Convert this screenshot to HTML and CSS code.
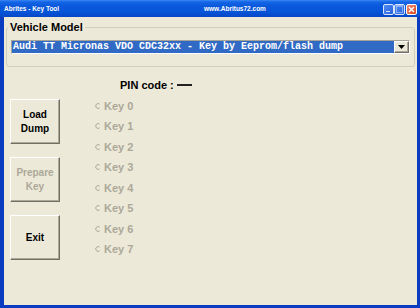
FILE: index.html
```html
<!DOCTYPE html>
<html>
<head>
<meta charset="utf-8">
<link rel="stylesheet" href="styles.css">
</head>
<body>
<div class="window">
  <div class="titlebar">
    <span class="title">Abrites - Key Tool</span>
    <span class="url">www.Abritus72.com</span>
    <div class="ctrls">
      <span class="cb min"><span class="bar"></span></span>
      <span class="cb max"><span class="box"></span></span>
      <span class="cb close"><svg width="7" height="7" viewBox="0 0 7 7"><path d="M1 1L6 6M6 1L1 6" stroke="#fff" stroke-width="1.4"/></svg></span>
    </div>
  </div>
  <div class="client">
    <fieldset class="group">
      <legend>Vehicle Model</legend>
      <div class="combo">
        <div class="sel">Audi TT Micronas VDO CDC32xx - Key by Eeprom/flash dump</div>
        <div class="drop"><svg width="7" height="4" viewBox="0 0 7 4"><path d="M0 0H7L3.5 4Z" fill="#000"/></svg></div>
      </div>
    </fieldset>
    <div class="main">
      <div class="btns">
        <div class="btn">Load<br>Dump</div>
        <div class="btn disabled">Prepare<br>Key</div>
        <div class="btn">Exit</div>
      </div>
      <div class="keys">
        <div class="pin">PIN code : <span class="dash"></span></div>
        <div class="radio"><svg class="rc" width="6" height="6" viewBox="0 0 6 6"><path d="M4.6 1.1A2.4 2.4 0 1 0 4.6 4.9" fill="none" stroke="#A9A69A" stroke-width="1"/></svg><span>Key 0</span></div>
        <div class="radio"><svg class="rc" width="6" height="6" viewBox="0 0 6 6"><path d="M4.6 1.1A2.4 2.4 0 1 0 4.6 4.9" fill="none" stroke="#A9A69A" stroke-width="1"/></svg><span>Key 1</span></div>
        <div class="radio"><svg class="rc" width="6" height="6" viewBox="0 0 6 6"><path d="M4.6 1.1A2.4 2.4 0 1 0 4.6 4.9" fill="none" stroke="#A9A69A" stroke-width="1"/></svg><span>Key 2</span></div>
        <div class="radio"><svg class="rc" width="6" height="6" viewBox="0 0 6 6"><path d="M4.6 1.1A2.4 2.4 0 1 0 4.6 4.9" fill="none" stroke="#A9A69A" stroke-width="1"/></svg><span>Key 3</span></div>
        <div class="radio"><svg class="rc" width="6" height="6" viewBox="0 0 6 6"><path d="M4.6 1.1A2.4 2.4 0 1 0 4.6 4.9" fill="none" stroke="#A9A69A" stroke-width="1"/></svg><span>Key 4</span></div>
        <div class="radio"><svg class="rc" width="6" height="6" viewBox="0 0 6 6"><path d="M4.6 1.1A2.4 2.4 0 1 0 4.6 4.9" fill="none" stroke="#A9A69A" stroke-width="1"/></svg><span>Key 5</span></div>
        <div class="radio"><svg class="rc" width="6" height="6" viewBox="0 0 6 6"><path d="M4.6 1.1A2.4 2.4 0 1 0 4.6 4.9" fill="none" stroke="#A9A69A" stroke-width="1"/></svg><span>Key 6</span></div>
        <div class="radio"><svg class="rc" width="6" height="6" viewBox="0 0 6 6"><path d="M4.6 1.1A2.4 2.4 0 1 0 4.6 4.9" fill="none" stroke="#A9A69A" stroke-width="1"/></svg><span>Key 7</span></div>
      </div>
    </div>
  </div>
</div>
</body>
</html>
```

FILE: styles.css
```css
html, body {
  margin: 0;
  padding: 0;
}
body {
  width: 420px;
  height: 308px;
  overflow: hidden;
  font-family: "Liberation Sans", Arial, sans-serif;
  background: #ECE9D8;
}
.window {
  width: 420px;
  height: 308px;
  display: flex;
  flex-direction: column;
  box-sizing: border-box;
}
.titlebar {
  height: 17px;
  flex: none;
  display: flex;
  align-items: center;
  background: linear-gradient(#3A86F2 0, #1466E6 2px, #0A58DC 6px, #0654D8 12px, #0547C6 17px);
  color: #fff;
  font-weight: bold;
  font-size: 6.5px;
  padding-left: 4px;
  box-sizing: border-box;
}
.title {
  width: 200px;
}
.url {
  flex: 1;
}
.ctrls {
  display: flex;
  gap: 0;
  margin-right: 3px;
  margin-top: 1px;
}
.cb {
  width: 11px;
  height: 11px;
  box-sizing: border-box;
  border: 1px solid #fff;
  border-radius: 2px;
  display: flex;
  align-items: center;
  justify-content: center;
  position: relative;
  background: linear-gradient(135deg, #5E93F5, #2C66E0);
  margin-left: 0;
}
.cb.min, .cb.max {
  opacity: 0.85;
}
.cb.min .bar {
  position: absolute;
  left: 2px;
  bottom: 2px;
  width: 4px;
  height: 1px;
  background: #fff;
}
.cb.max .box {
  width: 5px;
  height: 5px;
  border: 1px solid rgba(255,255,255,0.5);
  border-top-width: 2px;
}
.cb.close {
  background: linear-gradient(135deg, #F09070, #D8451E);
  margin-left: 1px;
}
.client {
  flex: 1;
  border-left: 4px solid #0A3CC0;
  border-right: 3px solid #0A3CC0;
  border-bottom: 3px solid #0A3CC0;
  display: flex;
  flex-direction: column;
  background: #ECE9D8;
}
.group {
  margin: 4px 2px 0 2px;
  padding: 0 4px 12px 4px;
  border: 1px solid #D0D0BF;
  border-radius: 3px;
  min-width: 0;
}
.group legend {
  font-weight: bold;
  font-size: 11px;
  line-height: 13px;
  padding: 0 2px;
  margin-left: -3px;
  color: #000;
}
.combo {
  margin-top: 6px;
  height: 14px;
  display: flex;
  box-sizing: border-box;
  border: 1px solid;
  border-color: #A5A397 #FFFFFF #FFFFFF #A5A397;
  background: #fff;
}
.sel {
  flex: 1;
  background: #316AC5;
  color: #fff;
  font-family: "Liberation Mono", "Courier New", monospace;
  font-weight: bold;
  font-size: 10px;
  line-height: 12px;
  padding-left: 1px;
  white-space: nowrap;
  overflow: hidden;
}
.drop {
  width: 15px;
  flex: none;
  box-sizing: border-box;
  border: 1px solid;
  border-color: #fff #716F64 #716F64 #fff;
  box-shadow: inset -1px -1px #ACA899;
  background: #ECE9D8;
  display: flex;
  align-items: center;
  justify-content: center;
}
.main {
  display: flex;
  align-items: flex-start;
}
.btns {
  margin-left: 6px;
  margin-top: 32px;
  display: flex;
  flex-direction: column;
  gap: 13px;
}
.btn {
  width: 50px;
  height: 45px;
  box-sizing: border-box;
  border: 1px solid;
  border-color: #fff #716F64 #716F64 #fff;
  box-shadow: inset -1px -1px #ACA899;
  display: flex;
  align-items: center;
  justify-content: center;
  text-align: center;
  font-weight: bold;
  font-size: 10px;
  line-height: 14px;
  color: #000;
}
.btn.disabled {
  color: #ACA899;
}
.keys {
  margin-left: 35px;
  margin-top: 12px;
  display: flex;
  flex-direction: column;
}
.pin {
  margin-left: 25px;
  font-weight: bold;
  font-size: 11px;
  line-height: 12px;
  height: 12px;
  margin-bottom: 4.8px;
  white-space: nowrap;
  display: flex;
  align-items: center;
}
.dash {
  display: inline-block;
  width: 15px;
  height: 1.5px;
  background: #222;
  margin-left: 3px;
}
.radio {
  height: 20.43px;
  display: flex;
  align-items: center;
  font-weight: bold;
  font-size: 11px;
  color: #ACA899;
}
.rc {
  margin-right: 3px;
  flex: none;
}
```
